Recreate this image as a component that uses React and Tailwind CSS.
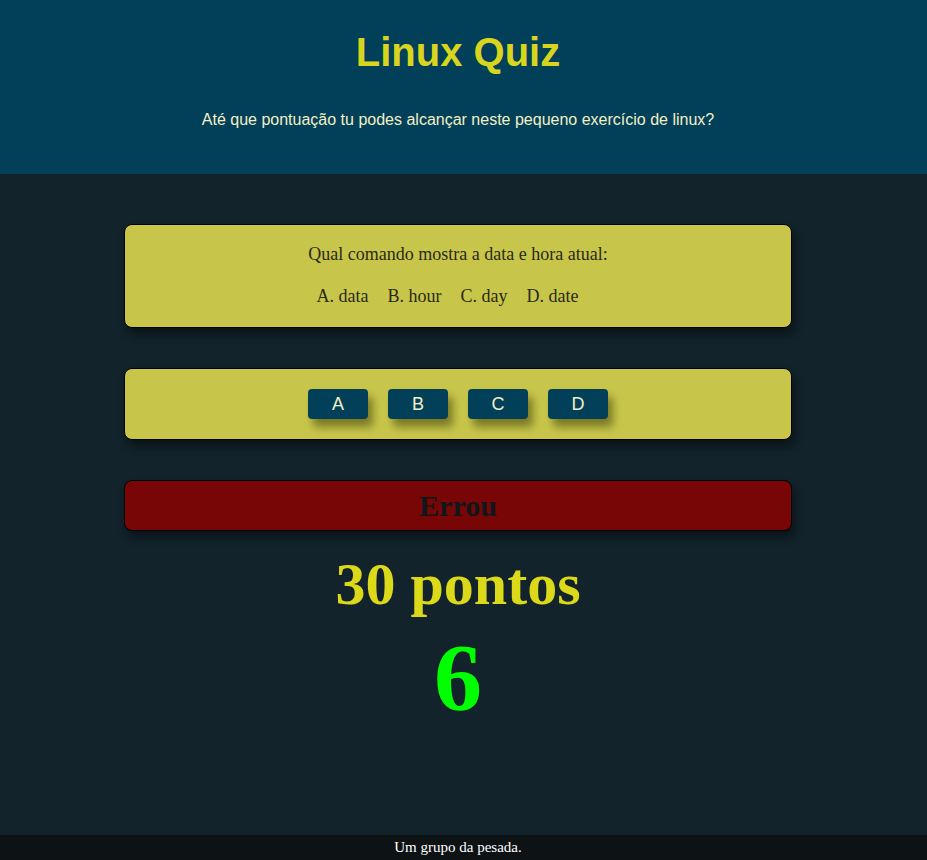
export default function App() {
  const serif = { fontFamily: '"Liberation Serif", "Times New Roman", serif' };
  return (
    <div className="min-h-[860px] flex flex-col bg-[#12232b]" style={{ fontFamily: '"Liberation Sans", Arial, sans-serif' }}>
      <header className="bg-[#02405a] h-[174px] flex flex-col">
        <div className="w-[916px] flex flex-col items-center">
          <h1 className="mt-[27px] text-[40px] leading-[50px] font-bold text-[#d9d51f]">Linux Quiz</h1>
          <p className="mt-[33px] text-[16px] leading-[20px] text-[#f2efc4]">Até que pontuação tu podes alcançar neste pequeno exercício de linux?</p>
        </div>
      </header>
      <main className="w-[916px] flex-1 flex flex-col items-center">
        <div className="mt-[50px] w-[668px] h-[104px] rounded-lg border border-black bg-[#c8c64a] shadow-[3px_6px_10px_rgba(0,0,0,0.45)] flex flex-col items-center text-[#2a2a14]" style={serif}>
          <p className="mt-[18px] text-[18px] leading-[22px]">Qual comando mostra a data e hora atual:</p>
          <div className="mt-[20px] pr-[21px] flex gap-[19px] text-[18px] leading-[22px]">
            <span>A. data</span>
            <span>B. hour</span>
            <span>C. day</span>
            <span>D. date</span>
          </div>
        </div>
        <div className="mt-[40px] w-[668px] h-[72px] rounded-lg border border-black bg-[#c8c64a] shadow-[3px_6px_10px_rgba(0,0,0,0.45)] flex justify-center items-start gap-[20px] pt-[20px]">
          {['A', 'B', 'C', 'D'].map((l) => (
            <button key={l} className="w-[60px] h-[30px] rounded-[4px] bg-[#02405a] text-[#f2efc4] text-[18px] leading-[30px] shadow-[5px_8px_8px_rgba(60,60,10,0.55)]">{l}</button>
          ))}
        </div>
        <div className="mt-[40px] w-[668px] h-[51px] rounded-lg border border-black bg-[#780606] shadow-[3px_6px_10px_rgba(0,0,0,0.45)] flex items-center justify-center" style={serif}>
          <span className="text-[30px] font-bold text-[#0f171b] leading-[36px] mt-[1px]">Errou</span>
        </div>
        <div className="mt-[21px] text-[60px] leading-[64px] font-bold text-[#dcd91a]" style={serif}>30 pontos</div>
        <div className="mt-[12px] text-[96px] leading-[100px] font-bold text-[#00ff00]" style={serif}>6</div>
      </main>
      <footer className="h-[25px] bg-[#0d1215]">
        <div className="w-[916px] text-center text-[15px] leading-[24px] text-white" style={serif}>Um grupo da pesada.</div>
      </footer>
    </div>
  );
}
